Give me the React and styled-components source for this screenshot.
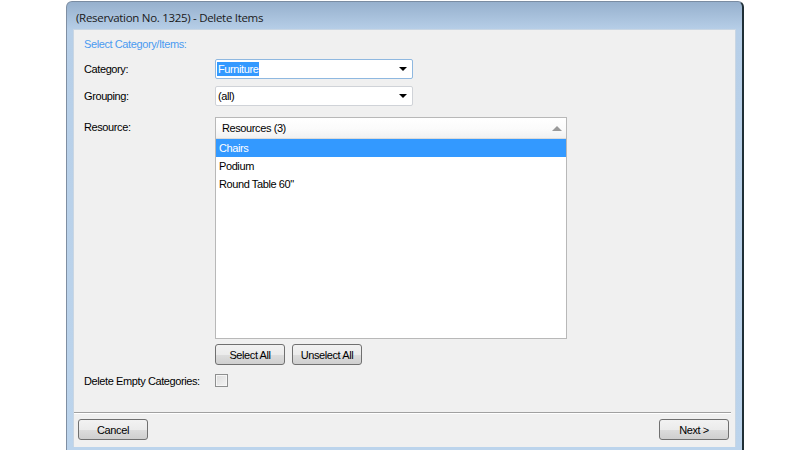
import styled, { createGlobalStyle } from 'styled-components'

const GlobalStyle = createGlobalStyle`
  html, body {
    margin: 0;
    padding: 0;
    background: #ffffff;
  }
  body {
    font-family: "Liberation Sans", Arial, sans-serif;
    font-size: 11px;
    letter-spacing: -0.4px;
    color: #000;
  }
`

const Page = styled.div`
  width: 812px;
  height: 450px;
  overflow: hidden;
  background: #fff;
  padding-top: 1px;
  box-sizing: border-box;
`

const Window = styled.div`
  margin-left: 66px;
  width: 678px;
  height: 452px;
  box-sizing: border-box;
  border-left: 1px solid #7f8fa3;
  border-right: 2px solid #1f2f36;
  border-top: 1px solid #7a8ca2;
  border-radius: 6px 6px 0 0;
  background: linear-gradient(#96b0cd 0px, #b7cfe8 28px, #bcd4ec 100%);
  display: flex;
  flex-direction: column;
`

const TitleBar = styled.div`
  height: 27px;
  box-sizing: border-box;
  display: flex;
  align-items: center;
  padding: 3px 0 0 9px;
  font-family: "Open Sans", "Liberation Sans", sans-serif;
  font-size: 11.5px;
  color: #1a1a1a;
  letter-spacing: -0.3px;
`

const Client = styled.div`
  margin: 0 6px 0 6px;
  height: 418px;
  background: #f0f0f0;
  border: 1px solid #c9d6e3;
  border-bottom: none;
  box-sizing: border-box;
  display: flex;
  flex-direction: column;
`

const Body = styled.div`
  padding: 7px 0 0 10px;
  flex: 1;
  display: flex;
  flex-direction: column;
`

const SectionTitle = styled.div`
  color: #4b9bf0;
  height: 14px;
  line-height: 14px;
  margin-bottom: 8px;
`

const Row = styled.div`
  display: flex;
  align-items: ${p => (p.$top ? 'flex-start' : 'center')};
  margin-top: ${p => p.$gap || 0}px;
`

const Label = styled.div`
  width: 131px;
  flex-shrink: 0;
  padding-top: ${p => p.$pad || 0}px;
`

const Combo = styled.div`
  width: 198px;
  height: 20px;
  box-sizing: border-box;
  background: #fff;
  border: 1px solid ${p => (p.$focus ? '#8fb8e0' : '#d0d3d8')};
  border-radius: 2px;
  display: flex;
  align-items: center;
  padding-left: 1px;
  position: relative;
`

const ComboText = styled.span`
  line-height: 14px;
  padding: 0 1px;
  background: ${p => (p.$selected ? '#3399ff' : 'transparent')};
  color: ${p => (p.$selected ? '#fff' : '#000')};
`

const Arrow = styled.span`
  position: absolute;
  right: 5px;
  top: 7px;
  width: 0;
  height: 0;
  border-left: 4px solid transparent;
  border-right: 4px solid transparent;
  border-top: 4px solid #000;
`

const ListBox = styled.div`
  width: 352px;
  height: 222px;
  box-sizing: border-box;
  background: #fff;
  border: 1px solid #b8b8b8;
  display: flex;
  flex-direction: column;
`

const ListHeader = styled.div`
  height: 21px;
  box-sizing: border-box;
  background: linear-gradient(#ffffff 0%, #fbfbfb 55%, #f1f1f1 100%);
  border-bottom: 1px solid #dadada;
  display: flex;
  align-items: center;
  justify-content: space-between;
  padding: 0 4px 0 6px;
`

const UpArrow = styled.span`
  width: 0;
  height: 0;
  border-left: 5px solid transparent;
  border-right: 5px solid transparent;
  border-bottom: 5px solid #9a9a9a;
  margin-top: 1px;
`

const ListItem = styled.div`
  height: 18px;
  line-height: 18px;
  padding-left: 3px;
  background: ${p => (p.$selected ? '#3399ff' : 'transparent')};
  color: ${p => (p.$selected ? '#fff' : '#000')};
`

const ButtonRow = styled.div`
  display: flex;
  gap: 7px;
  margin: 5px 0 0 131px;
`

const Button = styled.button`
  width: ${p => p.$w || 70}px;
  height: 21px;
  box-sizing: border-box;
  border: 1px solid #707070;
  border-radius: 3px;
  background: linear-gradient(#f2f2f2 0%, #ebebeb 50%, #dddddd 51%, #cfcfcf 100%);
  font-family: "Liberation Sans", Arial, sans-serif;
  font-size: 11px;
  letter-spacing: -0.4px;
  color: #000;
  padding: 0;
  cursor: default;
`

const Checkbox = styled.span`
  display: inline-block;
  width: 13px;
  height: 13px;
  box-sizing: border-box;
  border: 1px solid #8e8f8f;
  background: linear-gradient(135deg, #dcdcdc 0%, #f4f4f4 100%);
  box-shadow: inset 0 0 0 1px #f6f6f6;
`

const Separator = styled.div`
  height: 1px;
  background: #a0a0a0;
  border-bottom: 1px solid #fff;
  margin-right: 4px;
`

const Footer = styled.div`
  display: flex;
  justify-content: space-between;
  padding: 5px 6px 7px 4px;
`

const resources = [
  { name: 'Chairs', selected: true },
  { name: 'Podium' },
  { name: 'Round Table 60"' },
]

const App = () => {
  return (
    <Page>
      <GlobalStyle />
      <Window>
        <TitleBar>(Reservation No. 1325) - Delete Items</TitleBar>
        <Client>
          <Body>
            <SectionTitle>Select Category/Items:</SectionTitle>
            <Row>
              <Label>Category:</Label>
              <Combo $focus>
                <ComboText $selected>Furniture</ComboText>
                <Arrow />
              </Combo>
            </Row>
            <Row $gap={7}>
              <Label>Grouping:</Label>
              <Combo>
                <ComboText>(all)</ComboText>
                <Arrow />
              </Combo>
            </Row>
            <Row $gap={11} $top>
              <Label $pad={4}>Resource:</Label>
              <ListBox>
                <ListHeader>
                  <span>Resources (3)</span>
                  <UpArrow />
                </ListHeader>
                {resources.map(r => (
                  <ListItem key={r.name} $selected={r.selected}>
                    {r.name}
                  </ListItem>
                ))}
              </ListBox>
            </Row>
            <ButtonRow>
              <Button>Select All</Button>
              <Button>Unselect All</Button>
            </ButtonRow>
            <Row $gap={9}>
              <Label>Delete Empty Categories:</Label>
              <Checkbox />
            </Row>
          </Body>
          <Separator />
          <Footer>
            <Button>Cancel</Button>
            <Button>Next &gt;</Button>
          </Footer>
        </Client>
      </Window>
    </Page>
  )
}

export default App
